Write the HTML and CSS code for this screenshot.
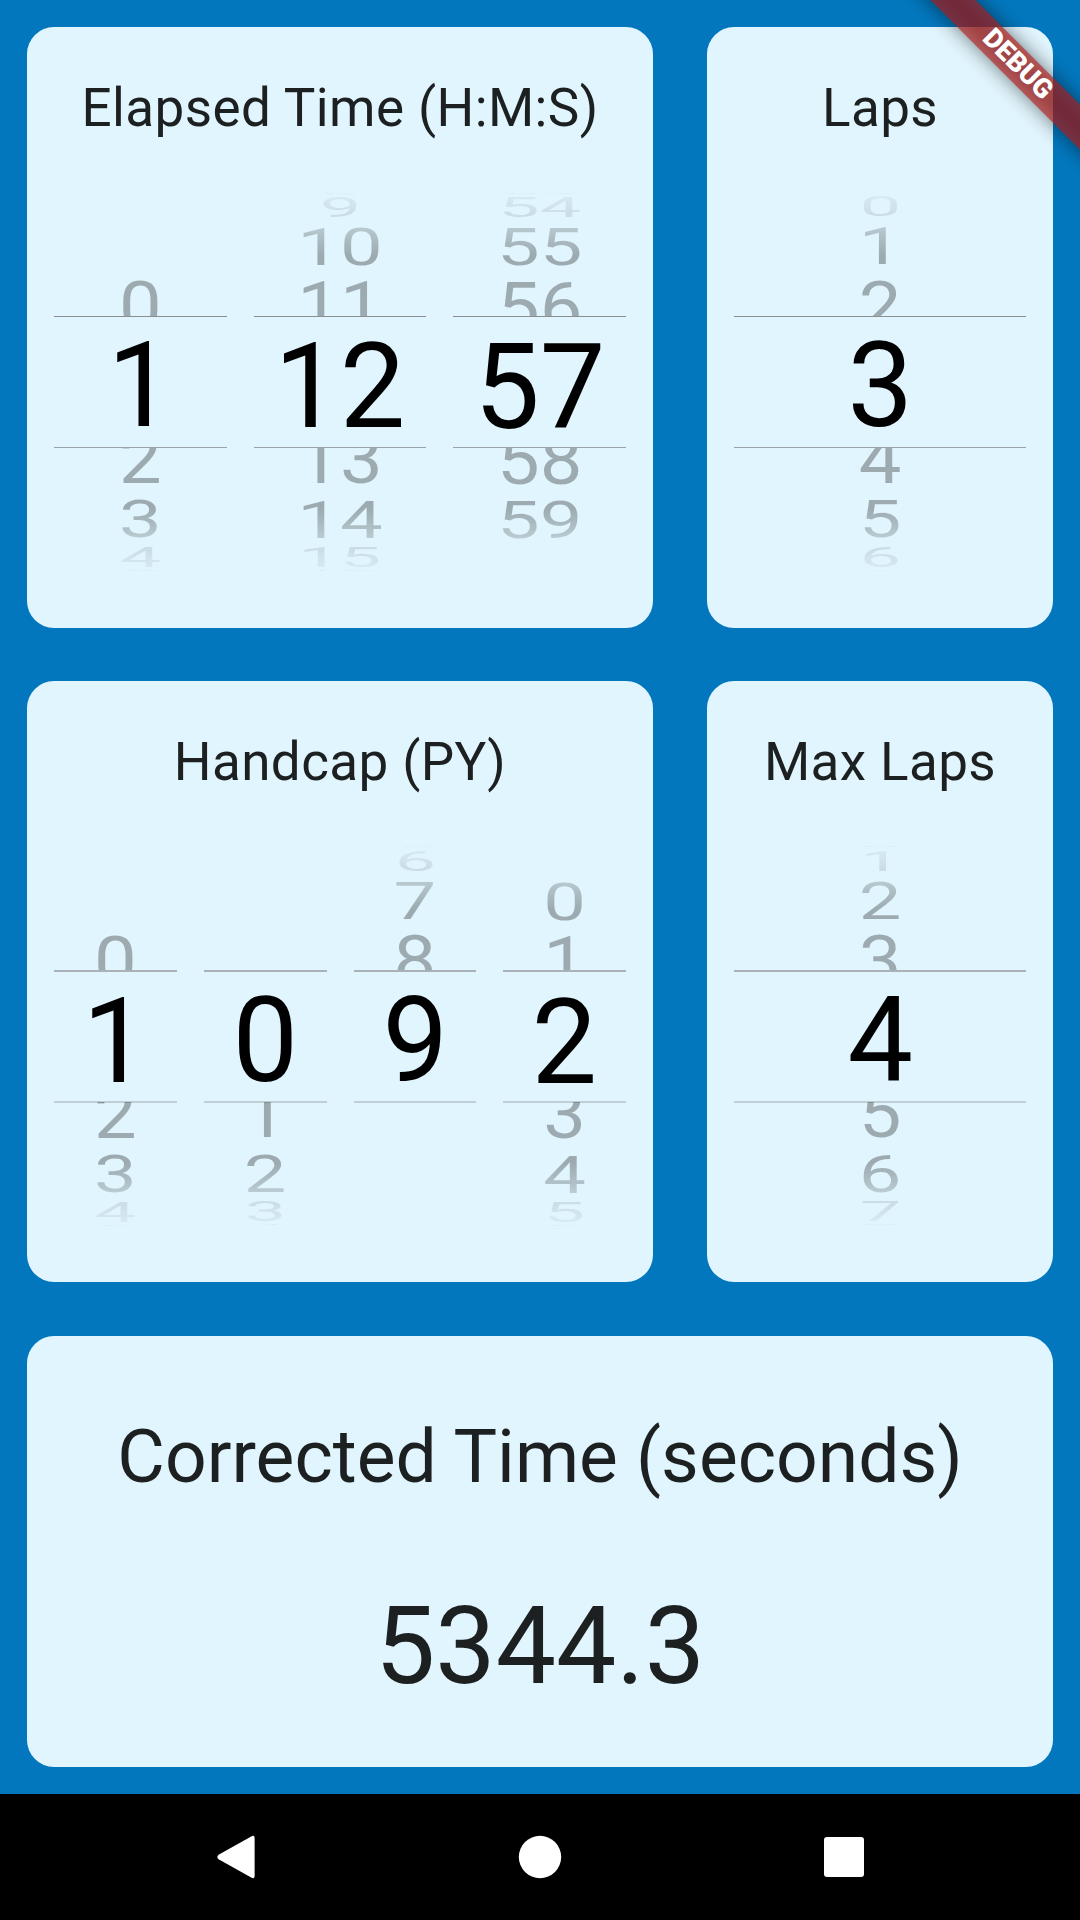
FILE: index.html
```html
<!DOCTYPE html>
<html lang="en">
<head>
<meta charset="utf-8">
<title>Corrected Time</title>
<link rel="stylesheet" href="styles.css">
</head>
<body>
<main class="screen">
  <section class="card">
    <h2 class="title">Elapsed Time (H:M:S)</h2>
    <div class="wheels">
      <div class="wheel">
        <div class="fade fade-up"><div class="slot edge"></div><div class="slot far"></div><div class="slot mid"></div><div class="slot near"><span>0</span></div></div>
        <div class="slot current"><span>1</span></div>
        <div class="fade fade-down"><div class="slot near"><span>2</span></div><div class="slot mid"><span>3</span></div><div class="slot far"><span>4</span></div><div class="slot edge"><span>5</span></div></div>
      </div>
      <div class="wheel shift-1">
        <div class="fade fade-up"><div class="slot edge"><span>8</span></div><div class="slot far"><span>9</span></div><div class="slot mid"><span>10</span></div><div class="slot near"><span>11</span></div></div>
        <div class="slot current"><span>12</span></div>
        <div class="fade fade-down"><div class="slot near"><span>13</span></div><div class="slot mid"><span>14</span></div><div class="slot far"><span>15</span></div><div class="slot edge"><span>16</span></div></div>
      </div>
      <div class="wheel shift-2">
        <div class="fade fade-up"><div class="slot edge"><span>53</span></div><div class="slot far"><span>54</span></div><div class="slot mid"><span>55</span></div><div class="slot near"><span>56</span></div></div>
        <div class="slot current"><span>57</span></div>
        <div class="fade fade-down"><div class="slot near"><span>58</span></div><div class="slot mid"><span>59</span></div><div class="slot far"></div><div class="slot edge"></div></div>
      </div>
    </div>
  </section>

  <section class="card">
    <h2 class="title">Laps</h2>
    <div class="wheels">
      <div class="wheel">
        <div class="fade fade-up"><div class="slot edge"></div><div class="slot far"><span>0</span></div><div class="slot mid"><span>1</span></div><div class="slot near"><span>2</span></div></div>
        <div class="slot current"><span>3</span></div>
        <div class="fade fade-down"><div class="slot near"><span>4</span></div><div class="slot mid"><span>5</span></div><div class="slot far"><span>6</span></div><div class="slot edge"><span>7</span></div></div>
      </div>
    </div>
  </section>

  <section class="card soft-lines">
    <h2 class="title">Handcap (PY)</h2>
    <div class="wheels">
      <div class="wheel shift-2">
        <div class="fade fade-up"><div class="slot edge"></div><div class="slot far"></div><div class="slot mid"></div><div class="slot near"><span>0</span></div></div>
        <div class="slot current"><span>1</span></div>
        <div class="fade fade-down"><div class="slot near"><span>2</span></div><div class="slot mid"><span>3</span></div><div class="slot far"><span>4</span></div><div class="slot edge"><span>5</span></div></div>
      </div>
      <div class="wheel shift-1">
        <div class="fade fade-up"><div class="slot edge"></div><div class="slot far"></div><div class="slot mid"></div><div class="slot near"></div></div>
        <div class="slot current"><span>0</span></div>
        <div class="fade fade-down"><div class="slot near"><span>1</span></div><div class="slot mid"><span>2</span></div><div class="slot far"><span>3</span></div><div class="slot edge"><span>4</span></div></div>
      </div>
      <div class="wheel shift-1">
        <div class="fade fade-up"><div class="slot edge"><span>5</span></div><div class="slot far"><span>6</span></div><div class="slot mid"><span>7</span></div><div class="slot near"><span>8</span></div></div>
        <div class="slot current"><span>9</span></div>
        <div class="fade fade-down"><div class="slot near"></div><div class="slot mid"></div><div class="slot far"></div><div class="slot edge"></div></div>
      </div>
      <div class="wheel shift-3">
        <div class="fade fade-up"><div class="slot edge"></div><div class="slot far"></div><div class="slot mid"><span>0</span></div><div class="slot near"><span>1</span></div></div>
        <div class="slot current"><span>2</span></div>
        <div class="fade fade-down"><div class="slot near"><span>3</span></div><div class="slot mid"><span>4</span></div><div class="slot far"><span>5</span></div><div class="slot edge"><span>6</span></div></div>
      </div>
    </div>
  </section>

  <section class="card soft-lines">
    <h2 class="title">Max Laps</h2>
    <div class="wheels">
      <div class="wheel shift-1">
        <div class="fade fade-up"><div class="slot edge"><span>0</span></div><div class="slot far"><span>1</span></div><div class="slot mid"><span>2</span></div><div class="slot near"><span>3</span></div></div>
        <div class="slot current"><span>4</span></div>
        <div class="fade fade-down"><div class="slot near"><span>5</span></div><div class="slot mid"><span>6</span></div><div class="slot far"><span>7</span></div><div class="slot edge"><span>8</span></div></div>
      </div>
    </div>
  </section>

  <section class="card result">
    <h1 class="result-title">Corrected Time (seconds)</h1>
    <output class="result-value">5344.3</output>
  </section>
</main>

<nav class="navbar">
  <svg width="48" height="48" viewBox="0 0 48 48"><path d="M39.2 3.4Q42.6 1.6 42.6 5V43Q42.6 46.4 39.2 44.6L7 26.6Q3.6 24 7 21.4Z" fill="#fff"/></svg>
  <svg width="48" height="48" viewBox="0 0 48 48"><circle cx="24" cy="24" r="21.2" fill="#fff"/></svg>
  <svg width="48" height="48" viewBox="0 0 48 48"><rect x="4" y="4" width="40" height="40" rx="3" fill="#fff"/></svg>
</nav>

<div class="banner-corner"><div class="banner"><span>DEBUG</span></div></div>
</body>
</html>
```

FILE: styles.css
```css
* { box-sizing: border-box; }

body {
  margin: 0;
  width: 1080px;
  height: 1920px;
  position: relative;
  overflow: hidden;
  display: flex;
  flex-direction: column;
  background: #0277bd;
  color: #1d2021;
  font-family: Roboto, "Liberation Sans", sans-serif;
}

.screen {
  height: 1794px;
  padding: 27px;
  display: grid;
  grid-template-columns: 626px 346px;
  grid-template-rows: 600.6px 600.8px 431px;
  column-gap: 54px;
  row-gap: 53.8px;
}

.card {
  background: #e1f5fe;
  border-radius: 27px;
  padding: 0 27px;
  overflow: hidden;
}

.title {
  margin: 0;
  height: 158px;
  line-height: 163px;
  font-size: 53px;
  font-weight: 400;
  letter-spacing: 0.4px;
  text-align: center;
  white-space: nowrap;
}

/* Number wheels */
.wheels { display: flex; gap: 27px; }
.wheel { flex: 1; --shift: 0px; }
.shift-1 { --shift: 1px; }
.shift-2 { --shift: 2px; }
.shift-3 { --shift: 3px; }

.slot {
  display: flex;
  justify-content: center;
  font-size: 76px;
  color: #000;
}
.fade .slot { color: rgba(0, 0, 0, 0.3); }
.slot span {
  height: 0;
  line-height: 0;
  transform-origin: 50% 26px;
  transform: translateY(calc(var(--base) - 26px + var(--shift) / 2)) scale(var(--sx, 1), var(--sy));
}

.edge { height: 10px; --sy: 0.03; --sx: 0.93; }
.far { height: 27px; --sy: 0.352; --sx: 0.97; }
.mid { height: 52px; --sy: 0.685; }
.near { height: 42px; --sy: 0.89; overflow: hidden; }

.fade-up .edge { --base: 8px; }
.fade-up .far { --base: 21.5px; }
.fade-up .mid { --base: 42.3px; }
.fade-up .near { --base: 56px; }
.fade-down .near { --base: 34.7px; }
.fade-down .mid { --base: 47.3px; }
.fade-down .far { --base: 24.5px; }
.fade-down .edge { --base: 2px; }

.fade-up { mask-image: linear-gradient(to bottom, transparent 2px, rgba(0,0,0,.13) 10px, rgba(0,0,0,.34) 32px, rgba(0,0,0,.6) 43px, #000 70px); }
.fade-down { mask-image: linear-gradient(to top, transparent 2px, rgba(0,0,0,.13) 10px, rgba(0,0,0,.34) 32px, rgba(0,0,0,.6) 43px, #000 70px); }

.current {
  height: 132px;
  border-top: 1px solid #8a8f91;
  border-bottom: 1px solid #9aa5aa;
  --sx: 1.535;
  --sy: 1.565;
}
.current span { transform: translateY(calc(82.6px + var(--shift))) scale(var(--sx), var(--sy)); }

.soft-lines .current {
  height: 133px;
  margin-bottom: -1px;
  border-top: 2px solid #a9b3b7;
  border-bottom: 2px solid #bfcfd5;
}
.soft-lines .current span { transform: translateY(calc(82px + var(--shift))) scale(var(--sx), var(--sy)); }

/* Result */
.result {
  grid-column: 1 / -1;
  display: flex;
  flex-direction: column;
  align-items: center;
}
.result-title {
  margin: 0;
  height: 220px;
  line-height: 243px;
  font-size: 73.2px;
  font-weight: 400;
  white-space: nowrap;
}
.result-value {
  line-height: 180px;
  font-size: 107.4px;
}

/* System navigation */
.navbar {
  height: 126px;
  padding: 0 212px;
  display: flex;
  align-items: center;
  justify-content: space-between;
  background: #000;
}

/* Corner ribbon, laid over the screen */
.banner-corner {
  position: absolute;
  top: 0;
  right: 0;
  width: 200px;
  height: 200px;
  overflow: hidden;
}
.banner {
  position: absolute;
  left: 70px;
  top: 73.5px;
  width: 260px;
  height: 31.5px;
  transform-origin: 130px -73.5px;
  transform: rotate(45deg);
}
.banner::before,
.banner::after {
  content: "";
  position: absolute;
  inset: 0;
}
.banner::before { background: rgba(0, 0, 0, 0.5); filter: blur(9.5px); }
.banner::after { background: rgba(183, 28, 28, 0.627); }
.banner span {
  position: relative;
  z-index: 1;
  display: block;
  padding-left: 2px;
  text-align: center;
  line-height: 31.5px;
  font-size: 27px;
  font-weight: 900;
  color: #fff;
}
```
